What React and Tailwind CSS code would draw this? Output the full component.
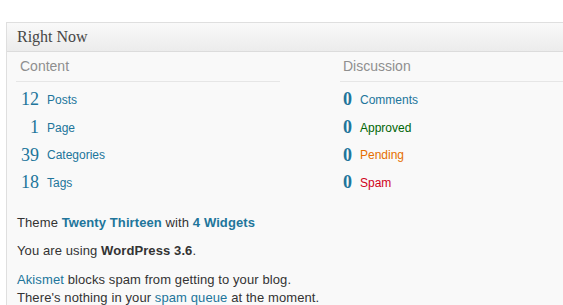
const content = [
  { n: '12', label: 'Posts' },
  { n: '1', label: 'Page' },
  { n: '39', label: 'Categories' },
  { n: '18', label: 'Tags' },
]

const discussion = [
  { n: '0', label: 'Comments', color: 'text-[#21759b]' },
  { n: '0', label: 'Approved', color: 'text-[#006505]' },
  { n: '0', label: 'Pending',  color: 'text-[#e66f00]' },
  { n: '0', label: 'Spam',     color: 'text-[#d0021b]' },
]

const sans  = "font-['Liberation_Sans',Arial,sans-serif]"
const serif = "font-['Liberation_Serif',Georgia,serif]"

export default function App() {
  return (
    <div className={`w-[563px] h-[305px] overflow-hidden bg-white pt-[22px] pl-[6px] ${sans}`}>
      <div className="w-[620px] h-[400px] border border-[#dfdfdf] bg-[#f9f9f9]">
        {/* header */}
        <div className="h-[29px] flex items-center pl-[10px] border-b border-[#dcdcdc] bg-gradient-to-b from-[#f9f9f9] to-[#ececec]">
          <span className={`${serif} text-[16px] text-[#464646]`}>Right Now</span>
        </div>

        <div className="flex pl-[9px]">
          {/* content */}
          <div className="w-[264px]">
            <div className="h-[30px] flex items-center pl-[4px] border-b border-[#e6e6e6] text-[14px] text-[#8f8f8f]">
              Content
            </div>
            <div className="mt-[4px]">
              {content.map(r => (
                <div key={r.label} className="h-[27.7px] flex items-center">
                  <span className={`${serif} w-[23px] text-right text-[18px] text-[#21759b]`}>{r.n}</span>
                  <span className="ml-[8px] text-[12px] text-[#21759b]">{r.label}</span>
                </div>
              ))}
            </div>
          </div>

          {/* discussion */}
          <div className="ml-[60px] flex-1">
            <div className="h-[30px] flex items-center pl-[3px] border-b border-[#e6e6e6] text-[14px] text-[#8f8f8f]">
              Discussion
            </div>
            <div className="mt-[4px]">
              {discussion.map(r => (
                <div key={r.label} className="h-[27.7px] flex items-center">
                  <span className={`${serif} w-[17px] pl-[3px] text-[18px] font-bold text-[#21759b]`}>{r.n}</span>
                  <span className={`ml-[3px] text-[12px] ${r.color}`}>{r.label}</span>
                </div>
              ))}
            </div>
          </div>
        </div>

        {/* versions */}
        <div className="pl-[10px] mt-[17px] text-[13px] leading-[18px] text-[#333] tracking-[0.1px]">
          <p>
            Theme <a className="font-bold text-[#21759b]">Twenty Thirteen</a> with <a className="font-bold text-[#21759b]">4 Widgets</a>
          </p>
          <p className="mt-[10px]">
            You are using <span className="font-bold">WordPress 3.6</span>.
          </p>
          <p className="mt-[11px]">
            <a className="text-[#21759b]">Akismet</a> blocks spam from getting to your blog.
            <br />
            There's nothing in your <a className="text-[#21759b]">spam queue</a> at the moment.
          </p>
        </div>
      </div>
    </div>
  )
}
